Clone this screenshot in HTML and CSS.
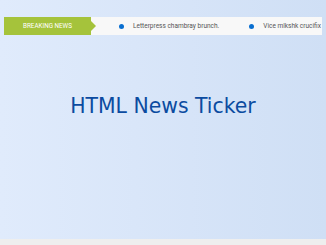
FILE: index.html
```html
<!DOCTYPE html>
<html lang="en">
<head>
  <meta charset="UTF-8">
  <meta name="viewport" content="width=device-width, initial-scale=1.0">
  <title>HTML News Ticker</title>
  <link rel="stylesheet" href="styles.css">
</head>
<body>
  <div class="page">
    <div class="ticker">
      <div class="ticker-label">Breaking News</div>
      <div class="ticker-track">
        <ul class="ticker-list">
          <li>Letterpress chambray brunch.</li>
          <li>Vice mlkshk crucifix beard chillwave meditation hoodie asymmetrical Helvetica.</li>
          <li>Ugh PBR&amp;B kale chips Echo Park.</li>
        </ul>
      </div>
    </div>

    <h1 class="title">HTML News Ticker</h1>
  </div>
</body>
</html>
```

FILE: styles.css
```css
html {
  background: #eeeeee;
}

body {
  margin: 0;
  font-family: "DejaVu Sans", sans-serif;
}

.page {
  height: 239px;
  padding: 17px 4px 0;
  box-sizing: border-box;
  background: linear-gradient(to right, #e0ebfc, #cfdff5);
}

/* ticker bar */
.ticker {
  display: flex;
  height: 18px;
  background: #f8f8f8;
  font-family: Roboto, "Liberation Sans", sans-serif;
  font-size: 6.5px;
}

.ticker-label {
  position: relative;
  flex: 0 0 87px;
  display: flex;
  align-items: center;
  justify-content: center;
  background: #a5c33b;
  color: #fff;
  font-size: 6.3px;
  text-transform: uppercase;
}

.ticker-label::after {
  content: "";
  position: absolute;
  right: -5px;
  top: 4px;
  border-left: 5px solid #a5c33b;
  border-top: 5px solid transparent;
  border-bottom: 5px solid transparent;
}

.ticker-track {
  flex: 1;
  overflow: hidden;
}

.ticker-list {
  display: flex;
  margin: 0;
  padding: 0 0 0 28px;
  list-style: none;
  white-space: nowrap;
  height: 100%;
  align-items: center;
}

.ticker-list li {
  display: flex;
  align-items: center;
  gap: 9px;
  margin-right: 30px;
  color: #555;
}

.ticker-list li::before {
  content: "";
  width: 5px;
  height: 5px;
  border-radius: 50%;
  background: #0a6fd0;
}

.title {
  margin: 59px 0 0;
  text-align: center;
  font-size: 20.4px;
  font-weight: normal;
  color: #0b4ba0;
}
```
